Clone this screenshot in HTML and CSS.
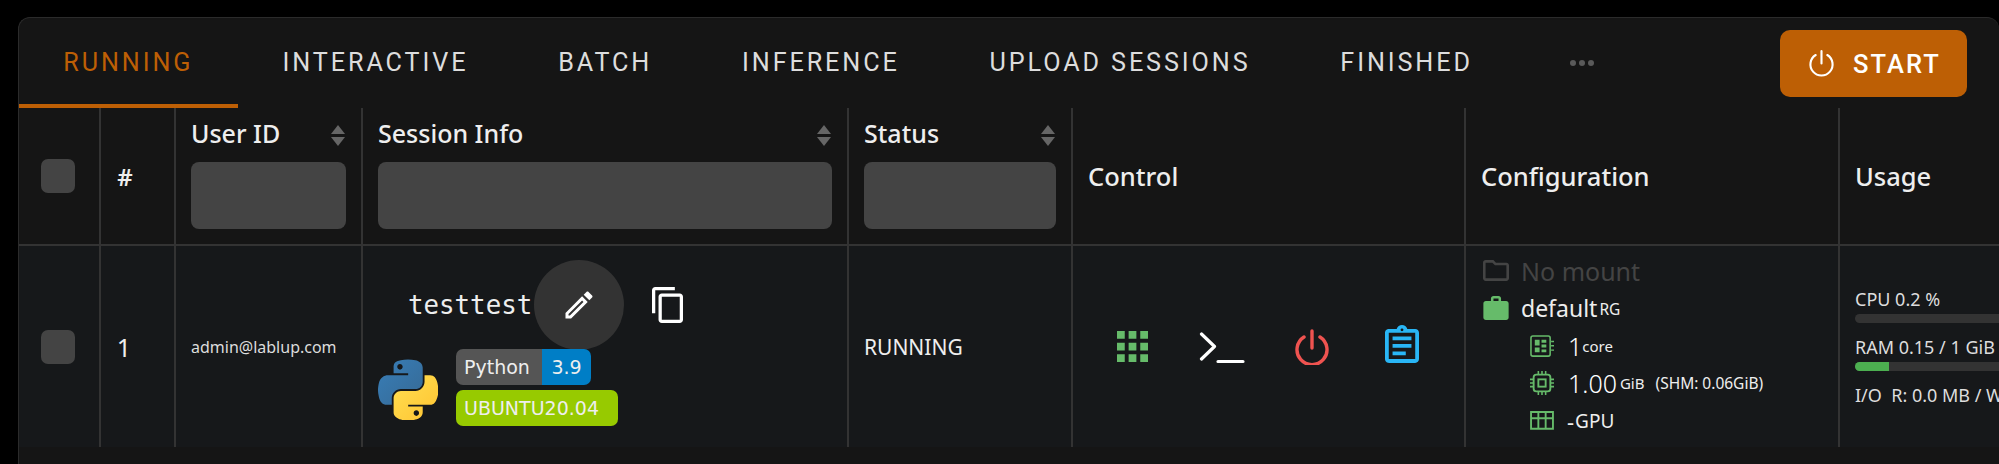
FILE: index.html
```html
<!DOCTYPE html>
<html>
<head>
<meta charset="utf-8">
<title>Sessions</title>
<link rel="stylesheet" href="styles.css">
</head>
<body>
<div class="panel">
  <div class="tabs">
    <a class="tab active">RUNNING</a>
    <a class="tab">INTERACTIVE</a>
    <a class="tab">BATCH</a>
    <a class="tab">INFERENCE</a>
    <a class="tab">UPLOAD SESSIONS</a>
    <a class="tab">FINISHED</a>
    <span class="more"><i></i><i></i><i></i></span>
    <button class="btn-start" type="button">
      <svg class="ic-start" viewBox="0 0 28 30"><path d="M14 2v13M8 6.2a11.5 11.5 0 1 0 12 0" fill="none" stroke="#fff" stroke-width="2.2" stroke-linecap="round"/></svg>
      <span>START</span>
    </button>
  </div>

  <div class="grid">
    <div class="th center"><span class="check"></span></div>
    <div class="th center"><b class="hash">#</b></div>
    <div class="th filter">
      <div class="th-top"><span>User ID</span><span class="sort"><s class="up"></s><s class="down"></s></span></div>
      <div class="input"></div>
    </div>
    <div class="th filter">
      <div class="th-top"><span>Session Info</span><span class="sort"><s class="up"></s><s class="down"></s></span></div>
      <div class="input"></div>
    </div>
    <div class="th filter">
      <div class="th-top"><span>Status</span><span class="sort"><s class="up"></s><s class="down"></s></span></div>
      <div class="input"></div>
    </div>
    <div class="th plain">Control</div>
    <div class="th plain">Configuration</div>
    <div class="th plain last">Usage</div>

    <div class="td center"><span class="check"></span></div>
    <div class="td center"><span class="num">1</span></div>
    <div class="td user">admin@lablup.com</div>
    <div class="td session">
      <div class="name-row">
        <span class="name">testtest</span>
        <span class="edit">
          <svg viewBox="0 0 24 24" width="36" height="36"><path fill="#fff" d="M14.06 9.02l.92.92L5.92 19H5v-.92l9.06-9.06M17.66 3c-.25 0-.51.1-.7.29l-1.83 1.83 3.75 3.75 1.83-1.83c.39-.39.39-1.02 0-1.41l-2.34-2.34c-.2-.2-.45-.29-.71-.29zm-3.6 3.19L3 17.25V21h3.75L17.81 9.94l-3.75-3.75z"/></svg>
        </span>
        <svg class="ic-copy" viewBox="2 1 19 22"><path fill="#fff" d="M16 1H4c-1.1 0-2 .9-2 2v14h2V3h12V1zm3 4H8c-1.1 0-2 .9-2 2v14c0 1.1.9 2 2 2h11c1.1 0 2-.9 2-2V7c0-1.1-.9-2-2-2zm0 16H8V7h11v14z"/></svg>
      </div>
      <div class="image-row">
        <svg class="py" viewBox="0 0 110.4 110">
          <defs>
            <linearGradient id="pyb" x1="0" y1="0" x2="1" y2="1"><stop offset="0" stop-color="#387eb8"/><stop offset="1" stop-color="#366994"/></linearGradient>
            <linearGradient id="pyy" x1="0" y1="0" x2="1" y2="1"><stop offset="0" stop-color="#ffe052"/><stop offset="1" stop-color="#ffc331"/></linearGradient>
          </defs>
          <path fill="url(#pyb)" d="M54.919.001c-4.584.022-8.961.413-12.812 1.095C30.76 3.099 28.7 7.295 28.7 15.032v10.219h26.813v3.406H18.638c-7.793 0-14.616 4.684-16.75 13.594-2.462 10.213-2.571 16.586 0 27.25 1.906 7.938 6.458 13.594 14.25 13.594h9.219v-12.25c0-8.85 7.657-16.656 16.75-16.656h26.781c7.454 0 13.406-6.138 13.406-13.625V15.032c0-7.266-6.13-12.725-13.406-13.937C64.282.328 59.502-.02 54.918.001zM40.419 8.22c2.77 0 5.031 2.298 5.031 5.125 0 2.816-2.262 5.094-5.031 5.094-2.78 0-5.031-2.278-5.031-5.094 0-2.827 2.251-5.125 5.031-5.125z"/>
          <path fill="url(#pyy)" d="M85.638 28.657v11.906c0 9.231-7.826 17-16.75 17H42.106c-7.336 0-13.406 6.278-13.406 13.625v25.531c0 7.266 6.319 11.54 13.406 13.625 8.488 2.496 16.627 2.947 26.781 0 6.75-1.954 13.406-5.888 13.406-13.625V86.5H55.513v-3.405H95.7c7.793 0 10.696-5.436 13.406-13.594 2.8-8.399 2.68-16.476 0-27.25-1.926-7.757-5.604-13.594-13.406-13.594H85.638zM70.575 93.313c2.78 0 5.031 2.278 5.031 5.094 0 2.827-2.251 5.125-5.031 5.125-2.77 0-5.031-2.298-5.031-5.125 0-2.816 2.261-5.094 5.031-5.094z"/>
        </svg>
        <div class="badges">
          <div class="badge"><span class="b-key">Python</span><span class="b-val">3.9</span></div>
          <div class="badge"><span class="b-os">UBUNTU20.04</span></div>
        </div>
      </div>
    </div>
    <div class="td status">RUNNING</div>
    <div class="td control">
      <svg class="ic-apps" viewBox="4 4 16 16"><path fill="#66bb6a" d="M4 8h4V4H4v4zm6 12h4v-4h-4v4zm-6 0h4v-4H4v4zm0-6h4v-4H4v4zm6 0h4v-4h-4v4zm6-10v4h4V4h-4zm-6 4h4V4h-4v4zm6 6h4v-4h-4v4zm0 6h4v-4h-4v4z"/></svg>
      <svg class="ic-term" viewBox="0 0 46 32"><path d="M2.5 2l13 12.500-13 12.500M19 29.500h25" fill="none" stroke="#fff" stroke-width="3.200" stroke-linecap="round" stroke-linejoin="round"/></svg>
      <svg class="ic-power" viewBox="0 0 34 36"><path d="M17 2v17M9 8a15 15 0 1 0 16 0" fill="none" stroke="#ef5350" stroke-width="3.400" stroke-linecap="round"/></svg>
      <svg class="ic-log" viewBox="3 1 18 20"><path fill="#29b6f6" d="M7 15h7v2H7zm0-4h10v2H7zm0-4h10v2H7zm12-4h-4.180C14.400 1.840 13.300 1 12 1c-1.300 0-2.400.84-2.820 2H5c-.14 0-.27.01-.4.04-.39.08-.74.28-1.010.55-.18.18-.33.4-.43.64-.1.23-.16.49-.16.77v14c0 .27.06.54.16.78s.25.45.43.64c.27.27.62.47 1.010.55.13.02.26.03.4.03h14c1.100 0 2-.9 2-2V5c0-1.100-.9-2-2-2zm-7-.25c.41 0 .75.34.75.75s-.34.75-.75.75-.75-.34-.75-.75.34-.75.75-.75zM19 19H5V5h14v14z"/></svg>
    </div>
    <div class="td config">
      <div class="cfg-row dim">
        <svg class="ic-folder" viewBox="2 4 20 16"><path fill="#444" d="M9.170 6l2 2H20v10H4V6h5.170M10 4H4c-1.100 0-1.990.9-1.990 2L2 18c0 1.100.9 2 2 2h16c1.100 0 2-.9 2-2V8c0-1.100-.9-2-2-2h-8l-2-2z"/></svg>
        <span>No mount</span>
      </div>
      <div class="cfg-row group">
        <svg class="ic-work" viewBox="2 2 20 19"><path fill="#66bb6a" d="M20 6h-4V4c0-1.110-.89-2-2-2h-4c-1.110 0-2 .89-2 2v2H4c-1.110 0-1.990.89-1.990 2L2 19c0 1.110.89 2 2 2h16c1.110 0 2-.89 2-2V8c0-1.110-.89-2-2-2zm-6 0h-4V4h4v2z"/></svg>
        <span>default</span><small>RG</small>
      </div>
      <div class="res cpu">
        <svg class="ic-res" viewBox="0 0 25 23"><rect x="1" y="1" width="20" height="21" rx="2" fill="none" stroke="#66bb6a" stroke-width="1.600"/><path fill="#66bb6a" d="M5 5h5v6H5zM12 5h5v3h-5zM12 10h5v3h-5zM5 13h5v5H5zM12 15h5v3h-5zM22 6h3v1.500h-3zM22 10.500h3V12h-3zM22 15h3v1.500h-3z"/></svg>
        <span class="big">1</span><small>core</small>
      </div>
      <div class="res mem">
        <svg class="ic-res" viewBox="0 0 23 23"><rect x="3.500" y="3.500" width="16" height="16" rx="2.500" fill="none" stroke="#66bb6a" stroke-width="1.800"/><rect x="8" y="8" width="7" height="7" fill="none" stroke="#66bb6a" stroke-width="1.800"/><path d="M8 0v3M11.500 0v3M15 0v3M8 20v3M11.500 20v3M15 20v3M0 8h3M0 11.500h3M0 15h3M20 8h3M20 11.500h3M20 15h3" stroke="#66bb6a" stroke-width="1.500"/></svg>
        <span class="big">1.00</span><small>GiB</small><small class="shm">(SHM: 0.06GiB)</small>
      </div>
      <div class="res gpu">
        <svg class="ic-res" viewBox="0 0 23 18"><path d="M1 1h21v16H1zM1 7h21M8 1v16M15 1v16" fill="none" stroke="#66bb6a" stroke-width="1.800"/></svg>
        <span class="dash">-</span><small>GPU</small>
      </div>
    </div>
    <div class="td usage">
      <div class="u-label">CPU 0.2 %</div>
      <div class="bar"></div>
      <div class="u-label">RAM 0.15 / 1 GiB</div>
      <div class="bar"><div class="fill" style="width:34px"></div></div>
      <div class="u-label">I/O&nbsp; R: 0.0 MB / W: 0.0 MB</div>
    </div>
  </div>
</div>
</body>
</html>
```

FILE: styles.css
```css
html, body {margin: 0; height: 464px; overflow: hidden; background: #000;}
body {padding: 17px 0 0 18px; box-sizing: border-box; font-family: "Noto Sans", sans-serif; color: #eee;}

.panel {width: 1981px; height: 447px; box-sizing: border-box; background: #151515; border-top: 1px solid #2b2b2b; border-left: 1px solid #2b2b2b; border-radius: 12px 12px 0 0; overflow: hidden;}

.tabs {display: flex; align-items: center; height: 90px;}
.tab {display: flex; align-items: center; height: 90px; box-sizing: border-box; padding: 3px 44.900px 0; font-family: Roboto, sans-serif; font-weight: 400; font-size: 25.200px; letter-spacing: 2.900px; color: #ddd; border-bottom: 4px solid transparent;}
.tab.active {padding: 3px 44.300px 0; color: #bd5f05; border-bottom-color: #bd5f05;}
.more {display: flex; gap: 2.500px; margin-left: 52px;}
.more i {width: 6.500px; height: 6.500px; border-radius: 50%; background: #5a5a5a;}
.btn-start {display: flex; align-items: center; gap: 18px; margin-left: auto; margin-right: 32px; width: 187px; height: 67px; box-sizing: border-box; padding: 0 0 0 28px; border: 0; border-radius: 10px; background: #bd5f05; color: #fff; font-family: Roboto, sans-serif; font-weight: 500; font-size: 25.500px; letter-spacing: 2.100px;}
.btn-start span {padding-top: 2px;}
.ic-start {width: 27px; height: 29px;}

.grid {display: grid; grid-template-columns: 82px 75px 187px 486px 224px 393px 374px 200px; grid-template-rows: 138px 201px;}
.th, .td {border-right: 2px solid #333; box-sizing: border-box; min-width: 0;}
.th {border-bottom: 2px solid #333;}
.th.last {border-right: 0;}
.center {display: flex; align-items: center; justify-content: center;}
.td {background: #16181a;}

.check {display: block; width: 34px; height: 34px; margin-left: -2px; border-radius: 7px; background: #444;}
.hash {font-size: 24px; font-weight: 600; margin-left: -25px;}
.num {font-size: 25px; font-weight: 400; margin-left: -27px;}

.filter {padding: 0 15px;}
.th-top {display: flex; justify-content: space-between; align-items: center; height: 50px; padding-bottom: 4px; font-size: 25px; font-weight: 500;}
.sort {display: flex; flex-direction: column; gap: 3px; margin: 4px 1px 0 0;}
.sort s {display: block; width: 0; height: 0; border-left: 7.500px solid transparent; border-right: 7.500px solid transparent;}
.sort .up {border-bottom: 9px solid #666;}
.sort .down {border-top: 9px solid #666;}
.input {height: 67px; border-radius: 8px; background: #444;}
.plain {display: flex; align-items: center; padding-left: 15px; font-size: 25.500px; font-weight: 500;}

.user {display: flex; align-items: center; padding-left: 15px; font-size: 16px; color: #ddd;}
.session {padding: 14px 0 0 15px;}
.name-row {display: flex; align-items: center; height: 89px; padding-left: 30px;}
.name {width: 126px; font-family: "DejaVu Sans Mono", monospace; font-size: 25.800px; font-weight: 300; color: #eee;}
.edit {display: flex; align-items: center; justify-content: center; flex: none; width: 90px; height: 90px; border-radius: 50%; background: #333;}
.ic-copy {width: 31px; height: 36px; margin-left: 28px;}
.image-row {display: flex; align-items: center; gap: 18px;}
.py {width: 60px; height: 61px; margin-top: 3px;}
.badges {display: flex; flex-direction: column; gap: 5px;}
.badge {display: flex; width: max-content; height: 36px; border-radius: 7px; overflow: hidden; font-family: "DejaVu Sans", sans-serif; font-size: 19px; color: #eee; line-height: 36px;}
.b-key {width: 86px; padding-left: 8px; box-sizing: border-box; background: #555;}
.b-val {width: 49px; text-align: center; background: #007ec6;}
.b-os {width: 162px; padding-left: 8px; box-sizing: border-box; background: #97ca00;}

.status {display: flex; align-items: center; padding-left: 15px; font-size: 21px;}
.control {display: flex; align-items: center;}
.ic-apps {width: 31px; height: 31px; margin-left: 44px;}
.ic-term {width: 46px; height: 32px; margin-left: 51px; margin-top: 2px;}
.ic-power {width: 34px; height: 36px; margin-left: 50px;}
.ic-log {width: 34px; height: 38px; margin-left: 56px; margin-top: -6px;}

.config {padding: 6px 0 0 17px;}
.cfg-row {display: flex; align-items: center; height: 37px; font-size: 25px;}
.cfg-row small {font-size: 15.500px; margin-left: 2px; margin-top: 2px;}
.group {font-size: 23px; margin: -1px 0 1px;}
.dim {color: #444; margin-bottom: 1px;}
.ic-folder {width: 26px; height: 21px; margin-right: 12px;}
.ic-work {width: 26px; height: 24px; margin-right: 12px;}
.res {display: flex; align-items: center; height: 37.500px; padding-left: 47px; font-size: 18px;}
.ic-res {width: 24px; flex: none; margin-right: 14px;}
.big {font-size: 25px; font-weight: 300; margin-right: 3px; color: #fff;}
.cpu .big {margin-right: 0;}
.gpu small {font-size: 19px;}
.dash {font-size: 22px; margin: 0 1px 0 -1px;}
.shm {font-size: 15.500px; margin-left: 11px;}

.usage {padding: 41px 0 0 15px; border-right: 0;}
.u-label {font-size: 18px; line-height: 24px; white-space: nowrap; color: #ddd;}
.bar {width: 300px; height: 9px; margin: 3px 0 12px; border-radius: 5px; background: #333; overflow: hidden;}
.fill {height: 100%; background: #4caf50;}
```
